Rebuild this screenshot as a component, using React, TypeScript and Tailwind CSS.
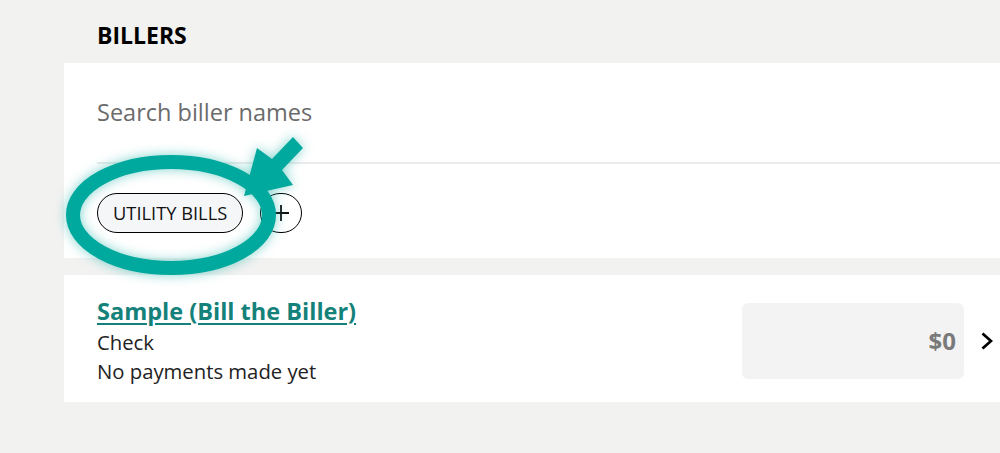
import React from "react";

export default function App() {
  return (
    <div className="relative w-[1000px] h-[453px] overflow-hidden bg-[#f2f2f1] font-['Open_Sans',sans-serif]">
      <div className="pt-[20px] pl-[97px] pb-[13px]">
        <h1 className="text-[23px] leading-[30px] font-bold text-black">BILLERS</h1>
      </div>

      <div className="ml-[64px] bg-white pt-[33px] pb-[25px]">
        <div className="pl-[33px] text-[23.5px] leading-[32px] text-[#6b6b6b]">Search biller names</div>
        <div className="ml-[33px] mt-[34px] h-[2px] bg-[#ececec]" />
        <div className="ml-[33px] mt-[29px] flex items-center gap-[17px]">
          <div className="h-[40px] px-[15px] flex items-center rounded-full border-[1.5px] border-black bg-[#f5f6f8] text-[18.3px] text-[#111]">
            UTILITY BILLS
          </div>
          <div className="w-[42px] h-[40px] rounded-full border-[1.5px] border-black flex items-center justify-center">
            <svg width="18" height="18" viewBox="0 0 18 18">
              <path d="M9 1v16M1 9h16" stroke="#111" strokeWidth="1.8" />
            </svg>
          </div>
        </div>
      </div>

      <div className="ml-[64px] mt-[17px] bg-white pt-[21px] pb-[16px] pl-[33px] pr-[7px] flex items-center">
        <div className="flex-1">
          <a className="block text-[23.5px] leading-[30px] font-bold text-[#14817a] underline underline-offset-[3px] decoration-[2px]">
            Sample (Bill the Biller)
          </a>
          <div className="mt-[1px] text-[20.3px] leading-[30px] text-[#222]">Check</div>
          <div className="text-[20.3px] leading-[29px] text-[#222]">No payments made yet</div>
        </div>
        <div className="w-[222px] h-[76px] rounded-[6px] bg-[#f3f3f3] flex items-center justify-end pr-[8px] text-[24px] font-bold text-[#7a7a7a]">
          $0
        </div>
        <div className="ml-[17px] w-[12px] flex items-center">
          <svg width="12" height="18" viewBox="0 0 12 18">
            <path d="M1.5 1.5L10 9L1.5 16.5" fill="none" stroke="#000" strokeWidth="2.8" />
          </svg>
        </div>
      </div>

      <svg
        className="absolute left-0 top-0 pointer-events-none drop-shadow-[0_0_6px_rgba(0,169,157,0.5)]"
        width="1000"
        height="453"
        viewBox="0 0 1000 453"
      >
        <polygon points="293,137 303,148 282,170 293,185 244,196 257,148 272,159" fill="#00a99d" />
        <ellipse cx="171" cy="215" rx="98" ry="53" fill="none" stroke="#00a99d" strokeWidth="14" />
      </svg>
    </div>
  );
}
